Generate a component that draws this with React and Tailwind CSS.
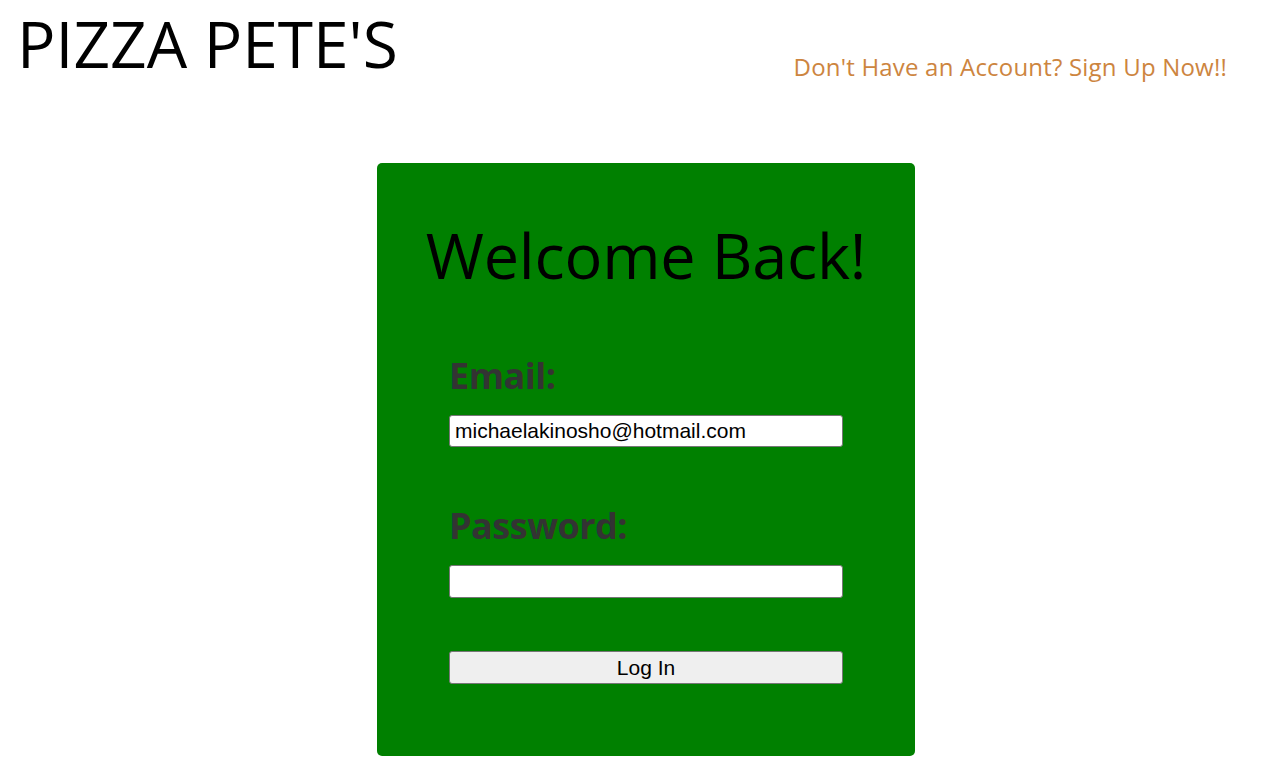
export default function App() {
  return (
    <div className="w-[1277px] h-[770px] overflow-hidden bg-white font-['Open_Sans',sans-serif]">
      <header className="flex justify-between items-start">
        <h1 className="ml-[17px] mt-0 text-[64px] leading-[88px] text-black font-normal">PIZZA PETE'S</h1>
        <a className="mr-[50px] mt-[52px] text-[24px] leading-[30px] text-[#cd853f] tracking-[0.2px]">Don't Have an Account? Sign Up Now!!</a>
      </header>
      <div className="ml-[377px] mt-[75px] w-[538px] h-[593px] bg-[#008000] rounded-[5px] flex flex-col">
        <h2 className="mt-[52px] text-center text-[63px] leading-[80px] text-black tracking-[-0.2px]">Welcome Back!</h2>
        <form className="ml-[72px] w-[394px] flex flex-col">
          <label className="mt-[59px] text-[36px] leading-[44px] font-bold text-[#333333] tracking-[-0.5px]">Email:</label>
          <input
            type="text"
            defaultValue="michaelakinosho@hotmail.com"
            className="mt-[17px] h-[32px] w-[394px] bg-white border border-[#767676] rounded-[3px] px-[5px] text-[21px] text-black font-['Liberation_Sans',Arial,sans-serif] outline-none"
          />
          <label className="mt-[57px] text-[36px] leading-[44px] font-bold text-[#333333] tracking-[-0.5px]">Password:</label>
          <input
            type="password"
            className="mt-[17px] h-[33px] w-[394px] bg-white border border-[#767676] rounded-[3px] px-[5px] text-[20px] outline-none"
          />
          <button
            type="button"
            className="mt-[53px] h-[33px] w-[394px] bg-[#efefef] border border-[#767676] rounded-[3px] text-[21px] text-black font-['Liberation_Sans',Arial,sans-serif]"
          >
            Log In
          </button>
        </form>
      </div>
    </div>
  );
}
